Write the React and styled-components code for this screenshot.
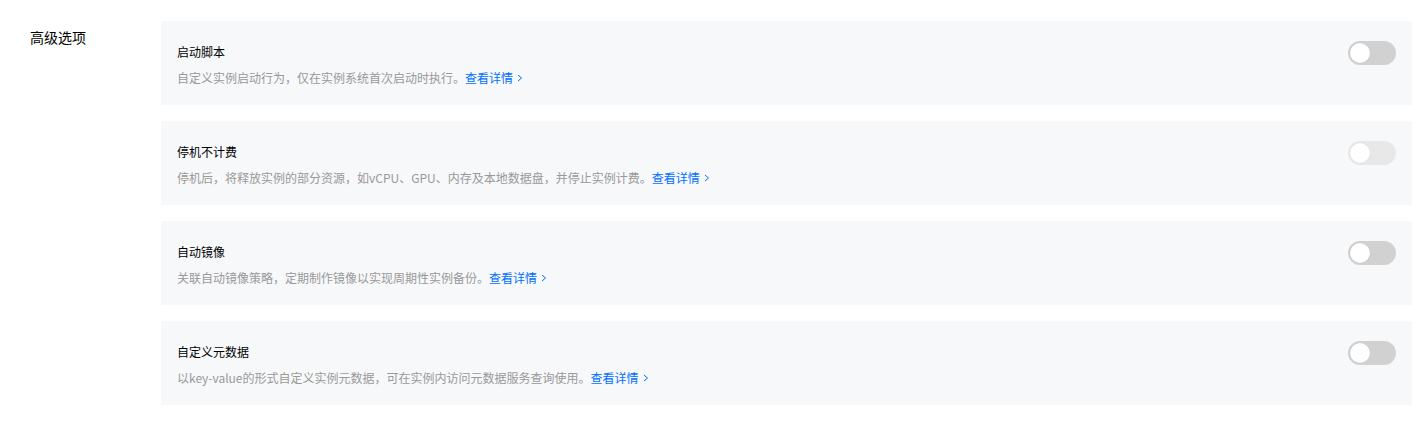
import React, { useState } from 'react';
import styled, { createGlobalStyle } from 'styled-components';

const GlobalStyle = createGlobalStyle`
  html, body {
    margin: 0;
    padding: 0;
    background: #fff;
  }
  body {
    font-family: "Microsoft YaHei", "Noto Sans CJK SC", "Noto Sans", sans-serif;
    -webkit-font-smoothing: antialiased;
  }
`;

const Page = styled.div`
  display: flex;
  padding: 21px 14px 0 30px;
`;

const Label = styled.div`
  width: 131px;
  flex-shrink: 0;
  padding-top: 6px;
  font-size: 14px;
  line-height: 20px;
  color: #000;
`;

const List = styled.div`
  flex: 1;
  display: flex;
  flex-direction: column;
  gap: 16px;
`;

const Card = styled.div`
  display: flex;
  align-items: flex-start;
  justify-content: space-between;
  height: 84px;
  box-sizing: border-box;
  padding: 21px 16px 17px 16px;
  background: #f7f8fa;
`;

const Body = styled.div`
  display: flex;
  flex-direction: column;
  gap: 6px;
`;

const Title = styled.div`
  font-size: 12px;
  line-height: 20px;
  color: #000;
`;

const Desc = styled.div`
  font-size: 12px;
  line-height: 20px;
  color: #999;
  display: flex;
  align-items: center;
`;

const Link = styled.a`
  color: #006eff;
  text-decoration: none;
  display: inline-flex;
  align-items: center;
  gap: 4px;
  cursor: pointer;
`;

const Track = styled.button`
  position: relative;
  width: 48px;
  height: 24px;
  margin-top: -1px;
  padding: 0;
  border: none;
  border-radius: 12px;
  background: ${(p) => (p.$disabled ? '#e8e8e8' : '#d1d1d1')};
  cursor: ${(p) => (p.$disabled ? 'not-allowed' : 'pointer')};
  flex-shrink: 0;
`;

const Knob = styled.span`
  position: absolute;
  top: 2px;
  left: 2px;
  width: 20px;
  height: 20px;
  border-radius: 50%;
  background: #fff;
  box-shadow: 0 0 1px rgba(0, 0, 0, 0.15);
`;

const Chevron = () => (
  <svg width="6" height="8" viewBox="0 0 6 8" fill="none">
    <path d="M1 1l3.5 3L1 7" stroke="#006eff" strokeWidth="1" />
  </svg>
);

const items = [
  { title: '启动脚本', desc: '自定义实例启动行为，仅在实例系统首次启动时执行。' },
  { title: '停机不计费', desc: '停机后，将释放实例的部分资源，如vCPU、GPU、内存及本地数据盘，并停止实例计费。', disabled: true },
  { title: '自动镜像', desc: '关联自动镜像策略，定期制作镜像以实现周期性实例备份。' },
  { title: '自定义元数据', desc: '以key-value的形式自定义实例元数据，可在实例内访问元数据服务查询使用。' },
];

const Switch = ({ disabled }) => {
  const [on] = useState(false);
  return (
    <Track $disabled={disabled} aria-checked={on} role="switch">
      <Knob />
    </Track>
  );
};

export default function App() {
  return (
    <>
      <GlobalStyle />
      <Page>
        <Label>高级选项</Label>
        <List>
          {items.map((it) => (
            <Card key={it.title}>
              <Body>
                <Title>{it.title}</Title>
                <Desc>
                  {it.desc}
                  <Link>
                    查看详情
                    <Chevron />
                  </Link>
                </Desc>
              </Body>
              <Switch disabled={it.disabled} />
            </Card>
          ))}
        </List>
      </Page>
    </>
  );
}
